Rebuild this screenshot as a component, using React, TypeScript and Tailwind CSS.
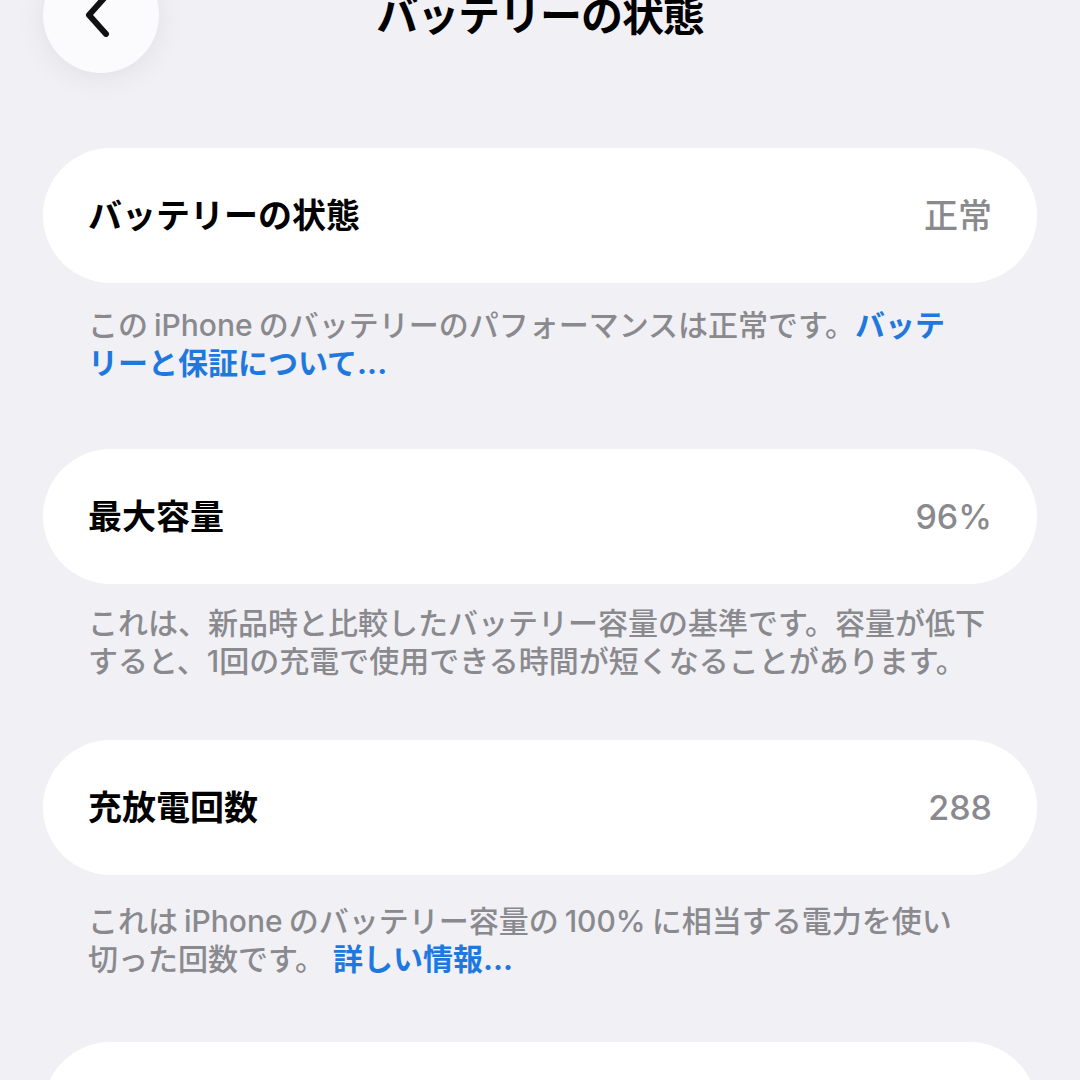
import { ReactNode } from "react";

function Row({ label, value }: { label: string; value?: string }) {
  return (
    <div className="flex h-[135px] items-center justify-between rounded-full bg-white px-[45px]">
      <span className="text-[34px] font-bold text-black">{label}</span>
      {value && <span className="text-[34px] font-medium text-[#8a8a8e]">{value}</span>}
    </div>
  );
}

function Note({ children, className }: { children: ReactNode; className: string }) {
  return (
    <p className={`px-[45px] text-[30px] leading-[38px] font-medium text-[#8a8a8e] ${className}`}>
      {children}
    </p>
  );
}

function Link({ children }: { children: ReactNode }) {
  return <span className="font-bold text-[#1f78de]">{children}</span>;
}

// latin words get a little air on both sides, like iOS does
function Latin({ children }: { children: ReactNode }) {
  return <span className="mx-[6px]">{children}</span>;
}

export default function App() {
  return (
    <div className="h-[1080px] overflow-hidden bg-[#f0f0f5] px-[43px] font-['Inter','Noto_Sans_CJK_JP',sans-serif]">
      {/* Nav bar */}
      <div className="-mt-[43px] mb-[75px] grid h-[116px] grid-cols-[116px_1fr_116px] items-center">
        <button
          type="button"
          className="flex h-[116px] w-[116px] items-center justify-center rounded-full bg-[#fbfbfd] shadow-[0_4px_30px_rgba(0,0,0,0.07)]"
        >
          <svg width="34" height="44" viewBox="0 0 34 44" fill="none" className="-ml-[8px]">
            <path d="M26 3 L9 22 L26 41" stroke="#111" strokeWidth="6" strokeLinecap="round" strokeLinejoin="round" />
          </svg>
        </button>
        <h1 className="text-center text-[42px] font-bold tracking-tight text-black">バッテリーの状態</h1>
        <div />
      </div>

      <Row label="バッテリーの状態" value="正常" />
      <Note className="mt-[23px] mb-[67px]">
        この<Latin>iPhone</Latin>のバッテリーのパフォーマンスは正常です。<Link>バッテ</Link>
        <br />
        <Link>リーと保証について...</Link>
      </Note>

      <Row label="最大容量" value="96%" />
      <Note className="mt-[20px] mb-[60px]">
        これは、新品時と比較したバッテリー容量の基準です。容量が低下
        <br />
        すると、1回の充電で使用できる時間が短くなることがあります。
      </Note>

      <Row label="充放電回数" value="288" />
      <Note className="mt-[27px] mb-[64px]">
        これは<Latin>iPhone</Latin>のバッテリー容量の<Latin>100%</Latin>に相当する電力を使い
        <br />
        切った回数です。 <Link>詳しい情報...</Link>
      </Note>

      <Row label="" />
    </div>
  );
}
